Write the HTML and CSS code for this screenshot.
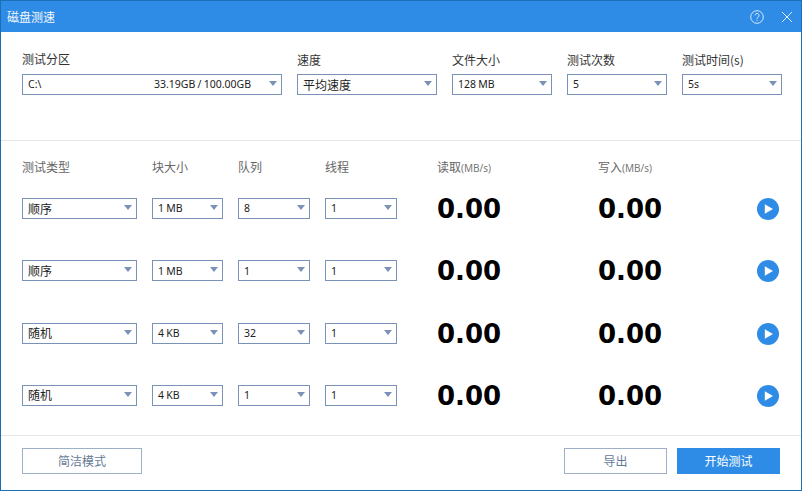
FILE: index.html
```html
<!DOCTYPE html>
<html lang="zh">
<head>
<meta charset="utf-8">
<title>磁盘测速</title>
<link rel="stylesheet" href="styles.css">
</head>
<body>
<div class="window">
  <header class="titlebar">
    <span class="title">磁盘测速</span>
    <div class="win-actions">
      <svg class="icon" viewBox="0 0 16 16" width="16" height="16"><circle cx="8" cy="8" r="6.3" fill="none" stroke="#fff" stroke-opacity=".8" stroke-width="1"/><path d="M6 6.4a2 2 0 1 1 3.1 1.7c-.7.4-1.1.8-1.1 1.6" fill="none" stroke="#fff" stroke-opacity=".8" stroke-width="1"/><rect x="7.5" y="10.8" width="1" height="1.1" fill="#fff" fill-opacity=".8"/></svg>
      <svg class="icon" viewBox="0 0 14 14" width="14" height="14"><path d="M2 2l10 10M12 2L2 12" fill="none" stroke="#fff" stroke-opacity=".85" stroke-width="1"/></svg>
    </div>
  </header>

  <section class="top">
    <div class="field f-part"><label class="lbl">测试分区</label>
      <div class="sel"><span class="val">C:\</span><span class="val info">33.19GB / 100.00GB</span><i class="arrow"></i></div></div>
    <div class="field f-speed"><label class="lbl">速度</label>
      <div class="sel"><span class="val cjk">平均速度</span><i class="arrow"></i></div></div>
    <div class="field f-s"><label class="lbl">文件大小</label>
      <div class="sel"><span class="val">128 MB</span><i class="arrow"></i></div></div>
    <div class="field f-s"><label class="lbl">测试次数</label>
      <div class="sel"><span class="val">5</span><i class="arrow"></i></div></div>
    <div class="field f-s"><label class="lbl">测试时间(s)</label>
      <div class="sel"><span class="val">5s</span><i class="arrow"></i></div></div>
  </section>

  <section class="bench">
    <div class="row head">
      <span>测试类型</span><span>块大小</span><span>队列</span><span>线程</span>
      <span class="rate">读取<small>(MB/s)</small></span><span class="rate">写入<small>(MB/s)</small></span><span></span>
    </div>
    <div class="row data">
      <div class="sel"><span class="val cjk">顺序</span><i class="arrow"></i></div>
      <div class="sel"><span class="val">1 MB</span><i class="arrow"></i></div>
      <div class="sel"><span class="val">8</span><i class="arrow"></i></div>
      <div class="sel"><span class="val">1</span><i class="arrow"></i></div>
      <b class="num">0.00</b><b class="num">0.00</b>
      <svg class="play" viewBox="0 0 22 22" width="22" height="22"><circle cx="11" cy="11" r="11" fill="#2f8ce6"/><path d="M7.8 6.2l8.2 4.8-8.2 4.8z" fill="#fff"/></svg>
    </div>
    <div class="row data">
      <div class="sel"><span class="val cjk">顺序</span><i class="arrow"></i></div>
      <div class="sel"><span class="val">1 MB</span><i class="arrow"></i></div>
      <div class="sel"><span class="val">1</span><i class="arrow"></i></div>
      <div class="sel"><span class="val">1</span><i class="arrow"></i></div>
      <b class="num">0.00</b><b class="num">0.00</b>
      <svg class="play" viewBox="0 0 22 22" width="22" height="22"><circle cx="11" cy="11" r="11" fill="#2f8ce6"/><path d="M7.8 6.2l8.2 4.8-8.2 4.8z" fill="#fff"/></svg>
    </div>
    <div class="row data">
      <div class="sel"><span class="val cjk">随机</span><i class="arrow"></i></div>
      <div class="sel"><span class="val">4 KB</span><i class="arrow"></i></div>
      <div class="sel"><span class="val">32</span><i class="arrow"></i></div>
      <div class="sel"><span class="val">1</span><i class="arrow"></i></div>
      <b class="num">0.00</b><b class="num">0.00</b>
      <svg class="play" viewBox="0 0 22 22" width="22" height="22"><circle cx="11" cy="11" r="11" fill="#2f8ce6"/><path d="M7.8 6.2l8.2 4.8-8.2 4.8z" fill="#fff"/></svg>
    </div>
    <div class="row data">
      <div class="sel"><span class="val cjk">随机</span><i class="arrow"></i></div>
      <div class="sel"><span class="val">4 KB</span><i class="arrow"></i></div>
      <div class="sel"><span class="val">1</span><i class="arrow"></i></div>
      <div class="sel"><span class="val">1</span><i class="arrow"></i></div>
      <b class="num">0.00</b><b class="num">0.00</b>
      <svg class="play" viewBox="0 0 22 22" width="22" height="22"><circle cx="11" cy="11" r="11" fill="#2f8ce6"/><path d="M7.8 6.2l8.2 4.8-8.2 4.8z" fill="#fff"/></svg>
    </div>
  </section>

  <footer class="footer">
    <button class="btn simple">简洁模式</button>
    <div class="spacer"></div>
    <button class="btn export">导出</button>
    <button class="btn primary">开始测试</button>
  </footer>
</div>
</body>
</html>
```
FILE: styles.css
```css
* { box-sizing: border-box; }
html, body { margin: 0; padding: 0; background: #fff; }
body {
  width: 802px; height: 491px; overflow: hidden;
  font-family: "Noto Sans CJK SC", "Noto Sans", sans-serif;
  font-size: 12px; color: #333;
}
.window {
  width: 802px; height: 491px;
  border: 1px solid #1c6fb4;
  display: flex; flex-direction: column; background: #fff;
}
.titlebar {
  height: 31px; flex: none; background: #2f8ce6;
  display: flex; align-items: center; justify-content: space-between;
  padding: 0 7px 0 6px;
}
.title { color: #fff; font-size: 12px; line-height: 1; opacity: .95; }
.win-actions { display: flex; align-items: center; gap: 15px; }
.icon { display: block; }

.top {
  height: 109px; flex: none;
  border-bottom: 1px solid #e6e6e6;
  padding: 19px 19px 0 21px;
  display: flex; gap: 15px; align-items: flex-start;
}
.field { display: flex; flex-direction: column; }
.f-part { width: 260px; }
.f-speed { width: 140px; }
.f-s { width: 100px; }
.lbl { font-size: 12px; line-height: 16px; height: 23px; color: #333; }
.f-speed .lbl, .f-s .lbl { padding-top: 1px; }

.sel {
  position: relative; height: 21px; background: #fff;
  border: 1px solid #7b92b8;
  display: flex; align-items: center; padding: 0 22px 0 5px;
  justify-content: space-between;
}
.val {
  font-family: "Noto Sans", sans-serif; font-size: 10.5px; line-height: 1;
  word-spacing: -.5px; color: #222; white-space: nowrap;
}
.val.cjk { font-family: "Noto Sans CJK SC", sans-serif; font-size: 12px; }
.val.info { margin-right: 8px; }
.arrow {
  position: absolute; right: 4px; top: 6px;
  width: 0; height: 0;
  border-left: 4px solid transparent; border-right: 4px solid transparent;
  border-top: 5px solid #7b92b8;
}

.bench { flex: 1; padding: 0 21px; }
.row {
  display: grid;
  grid-template-columns: 115px 71px 72px 72px 171px 130px 1fr;
  column-gap: 15px;
}
.row.head {
  height: 57px; padding-top: 18px; color: #666; font-size: 12px; line-height: 16px;
}
.rate { padding-left: 25px; }
.rate + .rate { padding-left: 0; }
.rate small { font-family: "Noto Sans", sans-serif; font-size: 10px; color: #777; }
.row.data { height: 62.33px; align-items: start; }
.row.data:last-child { height: auto; }
.num {
  font-family: "DejaVu Sans", sans-serif; font-weight: 700; font-size: 26px;
  line-height: 21px; margin-top: 1px; color: #000; display: block;
}
.num:nth-of-type(1) { padding-left: 25px; }
.play { display: block; justify-self: end; margin-right: 1px; }

.footer {
  height: 55px; flex: none; border-top: 1px solid #e6e6e6;
  display: flex; align-items: flex-start;
  padding: 12px 21px 0;
}
.spacer { flex: 1; }
.btn {
  height: 26px; padding: 0; margin: 0;
  font-family: "Noto Sans CJK SC", sans-serif; font-size: 12px; line-height: 1;
  background: #fff; border: 1px solid #9eb0c8; color: #667a96;
}
.simple { width: 120px; }
.export { width: 103px; margin-right: 10px; }
.primary { width: 103px; background: #2f8ce6; border-color: #2f8ce6; color: #fff; }
```
